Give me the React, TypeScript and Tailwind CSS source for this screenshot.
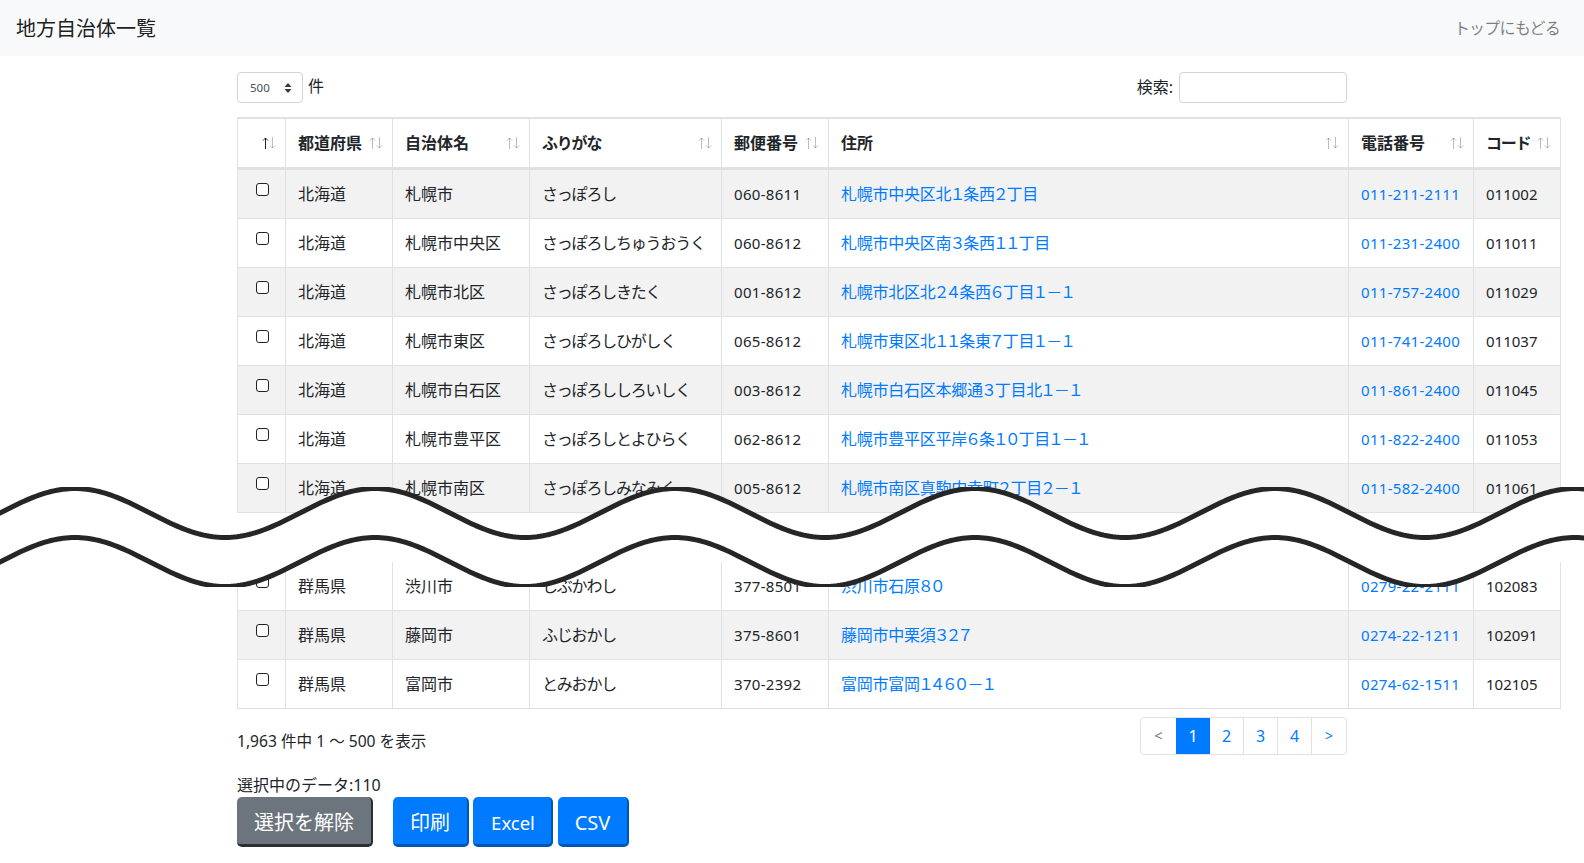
const rows = [
  ["北海道", "札幌市", "さっぽろし", "060-8611", "札幌市中央区北１条西２丁目", "011-211-2111", "011002"],
  ["北海道", "札幌市中央区", "さっぽろしちゅうおうく", "060-8612", "札幌市中央区南３条西１１丁目", "011-231-2400", "011011"],
  ["北海道", "札幌市北区", "さっぽろしきたく", "001-8612", "札幌市北区北２４条西６丁目１－１", "011-757-2400", "011029"],
  ["北海道", "札幌市東区", "さっぽろしひがしく", "065-8612", "札幌市東区北１１条東７丁目１－１", "011-741-2400", "011037"],
  ["北海道", "札幌市白石区", "さっぽろししろいしく", "003-8612", "札幌市白石区本郷通３丁目北１－１", "011-861-2400", "011045"],
  ["北海道", "札幌市豊平区", "さっぽろしとよひらく", "062-8612", "札幌市豊平区平岸６条１０丁目１－１", "011-822-2400", "011053"],
  ["北海道", "札幌市南区", "さっぽろしみなみく", "005-8612", "札幌市南区真駒内幸町２丁目２－１", "011-582-2400", "011061"],
];

const lastRows = [
  ["群馬県", "渋川市", "しぶかわし", "377-8501", "渋川市石原８０", "0279-22-2111", "102083"],
  ["群馬県", "藤岡市", "ふじおかし", "375-8601", "藤岡市中栗須３２７", "0274-22-1211", "102091"],
  ["群馬県", "富岡市", "とみおかし", "370-2392", "富岡市富岡１４６０－１", "0274-62-1511", "102105"],
];

const headers = [
  { label: "", w: "w-[49px]", first: true },
  { label: "都道府県", w: "w-[107px]" },
  { label: "自治体名", w: "w-[137px]" },
  { label: "ふりがな", w: "w-[192px]", kana: true },
  { label: "郵便番号", w: "w-[107px]" },
  { label: "住所", w: "w-[520px]" },
  { label: "電話番号", w: "w-[125px]" },
  { label: "コード", w: "w-[87px]", kana: true },
];

// torn-page band: white strip between two sine lines
const wavePoints = () => {
  const top: string[] = [];
  const bottom: string[] = [];
  for (let x = -12; x <= 1600; x += 3) {
    const y = 26 - 24.5 * Math.cos((2 * Math.PI * (x - 75)) / 300);
    top.push(`${x},${y.toFixed(2)}`);
    bottom.unshift(`${x},${(y + 49).toFixed(2)}`);
  }
  return [...top, ...bottom].join(" ");
};

function SortIcon({ active }: { active?: boolean }) {
  return (
    <svg width="14" height="12" viewBox="0 0 14 12" fill="none" strokeWidth="1" className="shrink-0">
      <path d="M3.5 12V1M1 3.5 3.5 1 6 3.5" stroke="#212529" strokeOpacity={active ? 1 : 0.3} />
      <path d="M10.5 0V11M8 8.5 10.5 11 13 8.5" stroke="#212529" strokeOpacity="0.3" />
    </svg>
  );
}

function Row({ row, striped }: { row: string[]; striped: boolean }) {
  const cell = "border-r border-b border-[#dee2e6] px-3 align-middle";
  return (
    <tr className={`h-[49px] ${striped ? "bg-[#f2f2f2]" : "bg-white"}`}>
      <td className={`${cell} border-l align-top pt-[13px] pl-[18px] pr-0`}>
        <input
          type="checkbox"
          className="block h-[13px] w-[13px] appearance-none rounded-[3px] border border-[#222] bg-white"
        />
      </td>
      <td className={cell}>{row[0]}</td>
      <td className={cell}>{row[1]}</td>
      <td className={`${cell} tracking-[-1.2px]`}>{row[2]}</td>
      <td className={`${cell} text-[15px] tracking-[0.3px]`}>{row[3]}</td>
      <td className={cell}>
        <a href="#" className="tracking-[-0.25px] text-[#007bff] [font-feature-settings:'palt']">{row[4]}</a>
      </td>
      <td className={`${cell} text-[15px] tracking-[0.3px]`}>
        <a href="#" className="text-[#007bff]">{row[5]}</a>
      </td>
      <td className={`${cell} text-[15px]`}>{row[6]}</td>
    </tr>
  );
}

function Pagination() {
  const item = "flex h-full items-center justify-center border-l border-[#dee2e6] text-[#007bff]";
  return (
    <div className="flex h-[38px] overflow-hidden rounded border border-[#dee2e6] bg-white">
      <span className="flex w-[35px] items-center justify-center text-[14px] text-[#6c757d]">&lt;</span>
      <span className="flex w-[34px] items-center justify-center bg-[#007bff] text-white">1</span>
      <span className="flex w-[33px] items-center justify-center text-[#007bff]">2</span>
      <span className={`${item} w-[34px]`}>3</span>
      <span className={`${item} w-[34px]`}>4</span>
      <span className={`${item} w-[35px] text-[14px]`}>&gt;</span>
    </div>
  );
}

export default function App() {
  return (
    <div
      className="relative min-h-[863px] bg-white pb-4 text-[16px] leading-6 text-[#212529]"
      style={{ fontFamily: '"Noto Sans", "Noto Sans CJK JP", sans-serif' }}
    >
      <nav className="flex h-14 items-center justify-between bg-[#f8f9fa] pl-4 pr-6">
        <span className="pt-0.5 text-[20px] text-black/90">地方自治体一覧</span>
        <a href="#" className="tracking-[-0.8px] text-black/50">トップにもどる</a>
      </nav>

      <div className="mx-auto w-[1110px] pt-4">
        <div className="mb-[14px] flex h-[31px] items-center justify-between">
          <div className="flex items-center gap-[5px]">
            <div className="flex h-[31px] w-[66px] items-center justify-between rounded border border-[#ced4da] bg-white pl-3 pr-[10px] text-[11.5px] text-[#495057]">
              <span>500</span>
              <svg width="8" height="12" viewBox="0 0 8 12" className="fill-[#343a40]">
                <path d="M4 1 7.5 5H.5zM4 11 .5 7h7z" />
              </svg>
            </div>
            <span className="pb-[3px]">件</span>
          </div>
          <label className="flex items-center gap-[6px]">
            <span className="pb-px">検索:</span>
            <input
              type="text"
              className="h-[31px] w-[168px] rounded border border-[#ced4da] bg-white"
            />
          </label>
        </div>

        <table className="w-[1324px] max-w-none table-fixed border-separate border-spacing-0 border-t-[1px] border-[#dee2e6]">
          <thead>
            <tr className="h-[52px]">
              {headers.map((h, i) => (
                <th
                  key={i}
                  className={`${h.w} border-t border-r border-b-[3px] border-[#dee2e6] pl-3 pr-[9px] text-left font-bold ${i === 0 ? "border-l" : ""}`}
                >
                  <div className="flex items-center justify-between">
                    <span className={`whitespace-nowrap ${h.kana ? "tracking-[-1.2px]" : ""}`}>{h.label}</span>
                    <SortIcon active={h.first} />
                  </div>
                </th>
              ))}
            </tr>
          </thead>
          <tbody>
            {rows.map((r, i) => (
              <Row key={r[6]} row={r} striped={i % 2 === 0} />
            ))}
            <tr className="h-[49px]">
              <td colSpan={8}></td>
            </tr>
            {lastRows.map((r, i) => (
              <Row key={r[6]} row={r} striped={i === 1} />
            ))}
          </tbody>
        </table>

        <div className="mt-2 flex items-start justify-between">
          <span className="pt-3 text-[15.6px]">1,963 件中 1 ～ 500 を表示</span>
          <Pagination />
        </div>

        <div className="mt-[18px]">選択中のデータ:110</div>
        <div className="flex text-[20px] leading-[30px] text-white">
          <button className="mr-5 h-[50px] w-[136px] rounded-[5px] border-r-2 border-b-[3px] border-[#2b2f33] bg-[#6c757d] pt-1">
            選択を解除
          </button>
          <button className="mr-1 h-[50px] w-[76px] rounded-[5px] border-r-2 border-b-[3px] border-[#0056b3] bg-[#007bff] pt-1">
            印刷
          </button>
          <button className="mr-[5px] h-[50px] w-[80px] rounded-[5px] border-r-2 border-b-[3px] border-[#0056b3] bg-[#007bff] pl-0.5 pt-1 text-[18.5px]">
            Excel
          </button>
          <button className="h-[50px] w-[71px] rounded-[5px] border-r-2 border-b-[3px] border-[#0056b3] bg-[#007bff] pt-1">
            CSV
          </button>
        </div>
      </div>

      <svg className="absolute left-0 top-[487px]" width="1584" height="100">
        <polygon points={wavePoints()} fill="#fff" stroke="#262626" strokeWidth="5" />
      </svg>
    </div>
  );
}
